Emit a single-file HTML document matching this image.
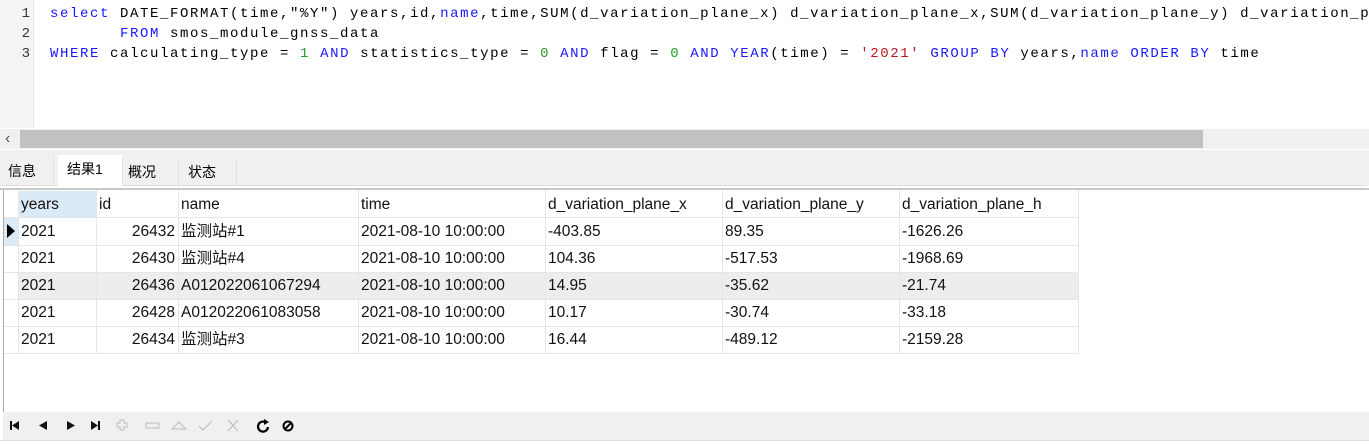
<!DOCTYPE html>
<html><head><meta charset="utf-8"><style>
*{margin:0;padding:0;box-sizing:border-box}
body{width:1369px;height:444px;overflow:hidden;background:#fff;position:relative;font-family:"Liberation Sans","Noto Sans CJK SC",sans-serif}
.a{position:absolute}
.code{font-family:"Liberation Mono",monospace;font-size:14px;letter-spacing:1.6px;white-space:pre;color:#000;line-height:20px}
.k{color:#1a1aff}.n{color:#2a9a2a}.s{color:#c0141e}
.ln{font-family:"Liberation Mono",monospace;font-size:14px;color:#333;width:30px;text-align:right}
.cell{position:absolute;font-size:15.5px;color:#111;line-height:27px;padding-left:3px;white-space:nowrap}
.vl{position:absolute;width:1px;background:#e6e6e6}
.hl{position:absolute;height:1px;background:#e6e6e6}
</style></head><body>
<div class="a" style="left:0;top:0;width:34px;height:128px;background:#f4f4f4;border-right:1px solid #e8e8e8"></div>
<div class="a ln" style="left:0;top:4px;line-height:20px">1<br>2<br>3</div>
<div class="a code" style="left:50px;top:4px"><span class="k">select</span> DATE_FORMAT(time,"%Y") years,id,<span class="k">name</span>,time,SUM(d_variation_plane_x) d_variation_plane_x,SUM(d_variation_plane_y) d_variation_p
       <span class="k">FROM</span> smos_module_gnss_data
<span class="k">WHERE</span> calculating_type = <span class="n">1</span> <span class="k">AND</span> statistics_type = <span class="n">0</span> <span class="k">AND</span> flag = <span class="n">0</span> <span class="k">AND</span> <span class="k">YEAR</span>(time) = <span class="s">'2021'</span> <span class="k">GROUP BY</span> years,<span class="k">name</span> <span class="k">ORDER BY</span> time</div>
<div class="a" style="left:0;top:129px;width:1369px;height:20px;background:#f0f0f0"></div>
<div class="a" style="left:20px;top:130px;width:1183px;height:18px;background:#c1c1c1"></div>
<div class="a" style="left:5px;top:129px;font-size:16px;color:#555;line-height:20px">&#8249;</div>
<div class="a" style="left:0;top:150px;width:1369px;height:36px;background:#f0f0f0"></div>
<div class="a" style="left:0;top:185px;width:1366px;height:1px;background:#ddd"></div>
<div class="a" style="left:0;top:156px;width:54px;height:30px;border-right:1px solid #e2e2e2;font-size:14px;line-height:30px;padding-left:8px">信息</div>
<div class="a" style="left:58px;top:155px;width:64px;height:31px;background:#fff;font-size:14px;line-height:28px;padding-left:9px">结果1</div>
<div class="a" style="left:122px;top:158px;width:57px;height:28px;border-right:1px solid #e2e2e2;border-left:1px solid #e2e2e2;font-size:14px;line-height:28px;padding-left:5px">概况</div>
<div class="a" style="left:179px;top:158px;width:58px;height:28px;border-right:1px solid #e2e2e2;font-size:14px;line-height:28px;padding-left:9px">状态</div>
<div class="a" style="left:0;top:188px;width:1369px;height:2px;background:#c8c8c8"></div>
<div class="a" style="left:3px;top:190px;width:1px;height:222px;background:#aaa"></div>
<div class="a" style="left:18px;top:191px;width:78px;height:27px;background:#daeaf7"></div>
<div class="a" style="left:18px;top:272px;width:1060px;height:27px;background:#ededed"></div>
<div class="a" style="left:4px;top:218px;width:14px;height:27px;background:#daeaf7"></div>
<div class="a" style="left:7px;top:224px;width:0;height:0;border-top:7px solid transparent;border-bottom:7px solid transparent;border-left:8px solid #000"></div>
<div class="vl" style="left:18px;top:190px;height:164px"></div>
<div class="vl" style="left:96px;top:190px;height:164px"></div>
<div class="vl" style="left:178px;top:190px;height:164px"></div>
<div class="vl" style="left:358px;top:190px;height:164px"></div>
<div class="vl" style="left:545px;top:190px;height:164px"></div>
<div class="vl" style="left:722px;top:190px;height:164px"></div>
<div class="vl" style="left:899px;top:190px;height:164px"></div>
<div class="vl" style="left:1078px;top:190px;height:164px"></div>
<div class="hl" style="left:4px;top:217px;width:1074px"></div>
<div class="hl" style="left:4px;top:245px;width:1074px"></div>
<div class="hl" style="left:4px;top:272px;width:1074px"></div>
<div class="hl" style="left:4px;top:299px;width:1074px"></div>
<div class="hl" style="left:4px;top:326px;width:1074px"></div>
<div class="hl" style="left:4px;top:353px;width:1074px"></div>
<div class="cell" style="left:18px;top:191px">years</div>
<div class="cell" style="left:96px;top:191px">id</div>
<div class="cell" style="left:178px;top:191px">name</div>
<div class="cell" style="left:358px;top:191px">time</div>
<div class="cell" style="left:545px;top:191px">d_variation_plane_x</div>
<div class="cell" style="left:722px;top:191px">d_variation_plane_y</div>
<div class="cell" style="left:899px;top:191px">d_variation_plane_h</div>

<div class="cell" style="left:18px;top:218px">2021</div><div class="cell" style="left:96px;top:218px;width:79px;text-align:right">26432</div><div class="cell" style="left:178px;top:218px">监测站#1</div><div class="cell" style="left:358px;top:218px">2021-08-10 10:00:00</div><div class="cell" style="left:545px;top:218px">-403.85</div><div class="cell" style="left:722px;top:218px">89.35</div><div class="cell" style="left:899px;top:218px">-1626.26</div>
<div class="cell" style="left:18px;top:245px">2021</div><div class="cell" style="left:96px;top:245px;width:79px;text-align:right">26430</div><div class="cell" style="left:178px;top:245px">监测站#4</div><div class="cell" style="left:358px;top:245px">2021-08-10 10:00:00</div><div class="cell" style="left:545px;top:245px">104.36</div><div class="cell" style="left:722px;top:245px">-517.53</div><div class="cell" style="left:899px;top:245px">-1968.69</div>
<div class="cell" style="left:18px;top:272px">2021</div><div class="cell" style="left:96px;top:272px;width:79px;text-align:right">26436</div><div class="cell" style="left:178px;top:272px">A012022061067294</div><div class="cell" style="left:358px;top:272px">2021-08-10 10:00:00</div><div class="cell" style="left:545px;top:272px">14.95</div><div class="cell" style="left:722px;top:272px">-35.62</div><div class="cell" style="left:899px;top:272px">-21.74</div>
<div class="cell" style="left:18px;top:299px">2021</div><div class="cell" style="left:96px;top:299px;width:79px;text-align:right">26428</div><div class="cell" style="left:178px;top:299px">A012022061083058</div><div class="cell" style="left:358px;top:299px">2021-08-10 10:00:00</div><div class="cell" style="left:545px;top:299px">10.17</div><div class="cell" style="left:722px;top:299px">-30.74</div><div class="cell" style="left:899px;top:299px">-33.18</div>
<div class="cell" style="left:18px;top:326px">2021</div><div class="cell" style="left:96px;top:326px;width:79px;text-align:right">26434</div><div class="cell" style="left:178px;top:326px">监测站#3</div><div class="cell" style="left:358px;top:326px">2021-08-10 10:00:00</div><div class="cell" style="left:545px;top:326px">16.44</div><div class="cell" style="left:722px;top:326px">-489.12</div><div class="cell" style="left:899px;top:326px">-2159.28</div>

<div class="a" style="left:3px;top:412px;width:1366px;height:28px;background:#f0f0f0"></div>
<div class="a" style="left:0;top:440px;width:1369px;height:4px;background:#fff;border-top:1px solid #ddd"></div>
<svg class="a" style="left:0;top:412px" width="320" height="28">
<g fill="#111">
<rect x="10" y="9" width="2" height="9"/><path d="M12 13.5 L19 9 L19 18 Z"/>
<path d="M39 13.5 L47 9 L47 18 Z"/>
<path d="M67 9 L75 13.5 L67 18 Z"/>
<path d="M91 9 L98 13.5 L91 18 Z"/><rect x="98" y="9" width="2" height="9"/>
</g>
<g fill="none" stroke="#bbb" stroke-width="1">
<path d="M120 8 h4 v3 h3 v4 h-3 v3 h-4 v-3 h-3 v-4 h3 z"/>
<rect x="146" y="11" width="13" height="5"/>
<path d="M172 17 L179 10 L186 17 Z"/>
<path d="M199 14 L203 18 L212 9"/>
<path d="M228 8 L238 19 M238 8 L228 19"/>
</g>
<path d="M265 10 A5 5 0 1 0 268 15" fill="none" stroke="#000" stroke-width="2.2"/>
<path d="M264 7 L269 10 L264 13 Z" fill="#000"/>
<circle cx="288" cy="14" r="4.5" fill="none" stroke="#000" stroke-width="2"/>
<path d="M285 17 L291 11" stroke="#000" stroke-width="2"/>
</svg>
</body></html>
